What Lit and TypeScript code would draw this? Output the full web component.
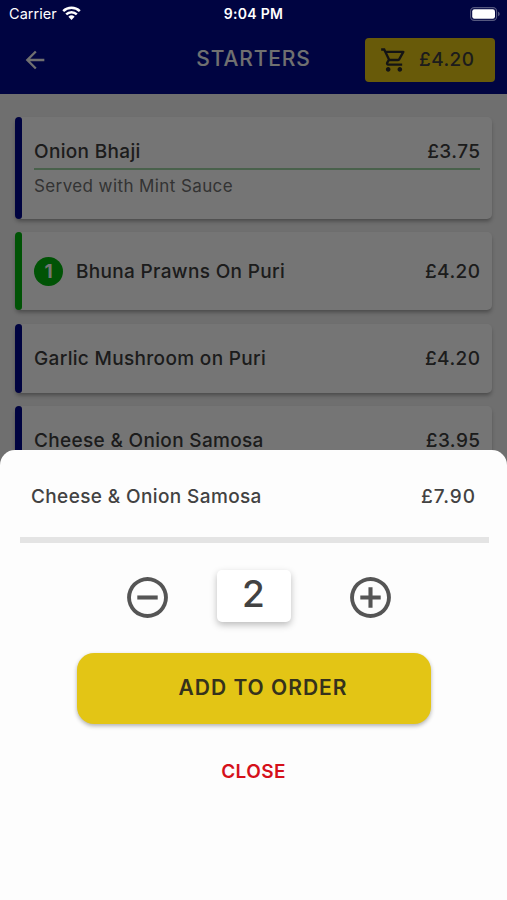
import { LitElement, html, css, svg, nothing } from "lit";
import { customElement, property, state } from "lit/decorators.js";
import { classMap } from "lit/directives/class-map.js";

interface Dish {
  name: string;
  price: string;
  note?: string;
  count?: number;
  size: string;
}

const DISHES: Dish[] = [
  { name: "Onion Bhaji", price: "£3.75", note: "Served with Mint Sauce", size: "tall" },
  { name: "Bhuna Prawns On Puri", price: "£4.20", count: 1, size: "mid" },
  { name: "Garlic Mushroom on Puri", price: "£4.20", size: "low" },
  { name: "Cheese & Onion Samosa", price: "£3.95", size: "low" },
];

@customElement("status-bar")
class StatusBar extends LitElement {
  static styles = css`
    :host { display: grid; grid-template-columns: 1fr auto 1fr; align-items: center; height: 27px;
      padding: 0 7px 0 9px; color: #fff; font: 400 14.5px Inter, sans-serif; }
    .left { display: flex; align-items: center; gap: 5px; letter-spacing: .05px; }
    .left svg { margin-top: -2px; }
    .time { margin-right: 2px; font-weight: 600; font-size: 14px; letter-spacing: .3px; }
    .right { display: flex; justify-content: flex-end; }
    svg { display: block; }
  `;
  render() {
    return html`
      <div class="left"><span>Carrier</span>
        <svg width="19" height="14" viewBox="0 0 19 14" fill="none" stroke="#fff" stroke-width="2.5">
          <path d="M1.2 5.1a11.8 11.8 0 0 1 16.6 0M4.2 8.4a7.5 7.5 0 0 1 10.6 0" />
          <path d="M9.5 14 6.4 10.8a4.5 4.5 0 0 1 6.2 0z" fill="#fff" stroke="none" />
        </svg>
      </div>
      <div class="time">9:04 PM</div>
      <div class="right">
        <svg width="30" height="14" viewBox="0 0 30 14">
          <rect x=".6" y=".6" width="26" height="12.8" rx="3.6" fill="none" stroke="#55587f" stroke-width="1.1" />
          <rect x="2.2" y="2.2" width="22.8" height="9.6" rx="2.2" fill="#fff" />
          <path d="M28 4.8c1.3.4 1.7 1.2 1.7 2.2s-.4 1.8-1.7 2.2z" fill="#55587f" />
        </svg>
      </div>`;
  }
}

@customElement("dish-card")
class DishCard extends LitElement {
  @property({ attribute: false }) dish!: Dish;
  static styles = css`
    .card { display: flex; box-sizing: border-box; border-radius: 5px; background: #fff;
      box-shadow: 0 3px 4px -1px rgba(0, 0, 0, .36); color: #3d3d3d; font: 450 19px Inter, sans-serif; }
    .stripe { width: 7px; border-radius: 4px 3px 3px 4px; background: #00078c; }
    .body { flex: 1; display: flex; flex-direction: column; justify-content: center; padding: 1px 12px 0; }
    .tall { height: 102px; }
    .mid { height: 78px; }
    .low { height: 69px; }
    .chosen .stripe, .badge { background: #00b50c; }
    .row { display: flex; align-items: center; line-height: 24px; }
    .name { flex: 1; letter-spacing: .33px; }
    .price { letter-spacing: .45px; margin-right: -.5px; }
    .note { margin-top: 4px; padding-top: 5px; border-top: 2px solid #9fd3a3; color: #707070;
      font-size: 17px; font-weight: 400; line-height: 22px; letter-spacing: .4px; }
    .badge { display: grid; place-items: center; width: 29px; height: 29px; margin-right: 13px;
      border-radius: 50%; color: #fff; font-weight: 700; }
  `;
  render() {
    const d = this.dish;
    return html`<div class=${classMap({ card: true, [d.size]: true, chosen: !!d.count })}>
      <div class="stripe"></div>
      <div class="body">
        <div class="row">
          ${d.count ? html`<span class="badge">${d.count}</span>` : nothing}
          <span class="name">${d.name}</span><span class="price">${d.price}</span>
        </div>
        ${d.note ? html`<div class="note">${d.note}</div>` : nothing}
      </div>
    </div>`;
  }
}

@customElement("order-sheet")
class OrderSheet extends LitElement {
  @state() private quantity = 2;
  static styles = css`
    :host { display: flex; flex-direction: column; align-items: center; box-sizing: border-box;
      background: #fdfdfd; border-radius: 15px 15px 0 0; color: #424242; font: 450 19px Inter, sans-serif; }
    button { border: 0; background: none; padding: 0; font: inherit; color: inherit; }
    .head { display: flex; justify-content: space-between; align-items: center; box-sizing: border-box;
      width: 100%; height: 87px; padding: 6px 31px 0; }
    .name { letter-spacing: .38px; }
    .price { letter-spacing: 1px; }
    .rule { width: 469px; height: 6px; margin-left: 1px; background: #e4e4e4; }
    .stepper { display: flex; align-items: center; justify-content: space-between; width: 272px;
      height: 52px; margin: 27px 0 0 10px; }
    .stepper svg { display: block; margin-top: 3px; }
    .qty { display: grid; place-items: center; width: 74px; height: 52px; box-sizing: border-box; padding-bottom: 5px;
      margin-right: 10px; border-radius: 5px; background: #fff; box-shadow: 0 3px 7px rgba(0, 0, 0, .26); font-size: 37px; }
    .add { width: 354px; height: 71px; margin-top: 31px; padding: 0 0 2px 19px; border-radius: 17px;
      background: #e3c515; box-shadow: 0 2px 4px rgba(0, 0, 0, .3); color: #35321c; font-size: 21px;
      font-weight: 600; letter-spacing: 1px; }
    .close { margin-top: 36px; color: #d5101a; line-height: 24px; font-weight: 600; letter-spacing: .4px; }
  `;
  private change(by: number) {
    this.quantity = Math.max(1, this.quantity + by);
  }
  private stepButton(label: string, by: number, bars: unknown) {
    return html`<button aria-label=${label} @click=${() => this.change(by)}>
      <svg width="49" height="49" viewBox="0 0 24 24" fill="#555">
        <path d="M12 2a10 10 0 1 0 0 20 10 10 0 0 0 0-20zm0 18.1a8.1 8.1 0 1 1 0-16.2 8.1 8.1 0 0 1 0 16.2z" />
        ${bars}
      </svg></button>`;
  }
  render() {
    return html`
      <div class="head"><span class="name">Cheese &amp; Onion Samosa</span><span class="price">£7.90</span></div>
      <div class="rule"></div>
      <div class="stepper">
        ${this.stepButton("Fewer", -1, svg`<path d="M7 11h10v2H7z" />`)}
        <div class="qty">${this.quantity}</div>
        ${this.stepButton("More", 1, svg`<path d="M11 7h2v4h4v2h-4v4h-2v-4H7v-2h4z" />`)}
      </div>
      <button class="add">ADD TO ORDER</button>
      <button class="close">CLOSE</button>`;
  }
}

@customElement("app-root")
class AppRoot extends LitElement {
  static styles = css`
    :host { display: block; position: relative; width: 507px; height: 900px; overflow: hidden;
      background: #f1f1f1; font-family: Inter, sans-serif; }
    .top { box-sizing: border-box; height: 94px; padding: 27px 12px 0 21px; background: #00098e;
      display: grid; grid-template-columns: 1fr auto 1fr; align-items: center; color: #f4f4f4; }
    .back { display: block; margin-top: -2px; }
    .title { margin: -4px 9px 0 0; font-size: 21px; font-weight: 450; letter-spacing: .85px; }
    .cart { justify-self: end; display: flex; align-items: center; gap: 11px; box-sizing: border-box;
      width: 130px; height: 44px; margin-top: -1px; padding-left: 15px; border-radius: 4px;
      background: #e3c515; color: #3d3d3d; font-size: 19px; font-weight: 450; letter-spacing: .4px; }
    .cart span { margin-top: -1px; }
    .list { display: flex; flex-direction: column; gap: 13.3px; padding: 23px 15px 0 15px; }
    .shade, .status, .sheet { position: absolute; left: 0; right: 0; }
    .shade { top: 0; bottom: 0; background: rgba(0, 0, 0, .54); }
    .status { top: 0; }
    .sheet { top: 450px; bottom: 0; }
  `;
  render() {
    return html`
      <header class="top">
        <svg class="back" width="28" height="28" viewBox="0 0 24 24" fill="#f4f4f4">
          <path d="M20 11H7.83l5.59-5.59L12 4l-8 8 8 8 1.41-1.41L7.83 13H20z" />
        </svg>
        <div class="title">STARTERS</div>
        <div class="cart">
          <svg width="28" height="28" viewBox="0 0 24 24" fill="#2c2c2c">
            <path d="M15.55 13c.75 0 1.41-.41 1.75-1.03l3.58-6.49A.996.996 0 0 0 20.01 4H5.21l-.94-2H1v2h2l3.6 7.59-1.35 2.44C4.52 15.37 5.48 17 7 17h12v-2H7l1.1-2h7.45zM6.16 6h12.15l-2.76 5H8.53L6.16 6zM7 18c-1.1 0-1.99.9-1.99 2S5.9 22 7 22s2-.9 2-2-.9-2-2-2zm10 0c-1.1 0-1.99.9-1.99 2s.89 2 1.99 2 2-.9 2-2-.9-2-2-2z" />
          </svg>
          <span>£4.20</span>
        </div>
      </header>
      <main class="list">${DISHES.map((d) => html`<dish-card .dish=${d}></dish-card>`)}</main>
      <div class="shade"></div>
      <status-bar class="status"></status-bar>
      <order-sheet class="sheet"></order-sheet>`;
  }
}
